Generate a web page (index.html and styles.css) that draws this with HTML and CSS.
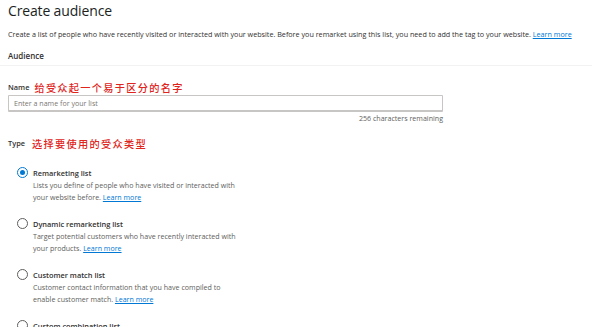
FILE: index.html
```html
<!DOCTYPE html>
<html lang="en">
<head>
    <meta charset="UTF-8">
    <title>Create audience</title>
    <link rel="stylesheet" href="styles.css">
</head>
<body>
    <div class="page">
        <h1 class="title">Create audience</h1>
        <p class="intro">Create a list of people who have recently visited or interacted with your website. Before you remarket using this list, you need to add the tag to your website. <a href="#">Learn more</a></p>
        <h2 class="section-title">Audience</h2>

        <div class="field name-field">
            <div class="field-label">
                <span>Name</span>
                <span class="note">给受众起一个易于区分的名字</span>
            </div>
            <input class="text-input" type="text" placeholder="Enter a name for your list">
            <div class="counter">256 characters remaining</div>
        </div>

        <div class="field type-field">
            <div class="field-label">
                <span>Type</span>
                <span class="note">选择要使用的受众类型</span>
            </div>
            <ul class="type-list">
                <li class="type-item">
                    <span class="radio checked"></span>
                    <div class="type-text">
                        <div class="type-name">Remarketing list</div>
                        <div class="type-desc">Lists you define of people who have visited or interacted with your website before. <a href="#">Learn more</a></div>
                    </div>
                </li>
                <li class="type-item">
                    <span class="radio"></span>
                    <div class="type-text">
                        <div class="type-name">Dynamic remarketing list</div>
                        <div class="type-desc">Target potential customers who have recently interacted with your products. <a href="#">Learn more</a></div>
                    </div>
                </li>
                <li class="type-item">
                    <span class="radio"></span>
                    <div class="type-text">
                        <div class="type-name">Customer match list</div>
                        <div class="type-desc">Customer contact information that you have compiled to enable customer match. <a href="#">Learn more</a></div>
                    </div>
                </li>
                <li class="type-item">
                    <span class="radio"></span>
                    <div class="type-text">
                        <div class="type-name">Custom combination list</div>
                    </div>
                </li>
            </ul>
        </div>
    </div>
</body>
</html>
```

FILE: styles.css
```css
body {
    margin: 0;
    background: #ffffff;
    font-family: 'Open Sans', 'Noto Sans', sans-serif;
    color: #323130;
}

.page {
    padding: 1px 8px 0;
}

.title {
    margin: 0;
    font-size: 14px;
    font-weight: 400;
    line-height: 20px;
    letter-spacing: -0.15px;
    color: #201f1e;
}

.intro {
    margin: 7px 0 0;
    font-size: 7.2px;
    line-height: 12px;
    color: #323130;
}

a {
    color: #0078d4;
    text-decoration: underline;
}

.section-title {
    margin: 10px -8px 0;
    padding: 0 8px 3px;
    font-size: 8px;
    font-weight: 600;
    line-height: 12px;
    border-bottom: 1px solid #f3f2f1;
}

.field-label {
    display: flex;
    align-items: center;
    gap: 5px;
    height: 14px;
    font-size: 7.4px;
    font-weight: 600;
}

.note {
    font-family: 'Noto Sans CJK SC', sans-serif;
    font-size: 10.2px;
    font-weight: 500;
    letter-spacing: 1.3px;
    color: #e0241b;
}

.type-field .note {
    margin-left: 2px;
}

.name-field {
    margin-top: 14px;
    width: 435px;
}

.text-input {
    display: block;
    box-sizing: border-box;
    width: 100%;
    height: 17px;
    margin-top: 1px;
    padding: 0 5px;
    border: 1px solid #c8c6c4;
    border-bottom-width: 2px;
    border-radius: 1px;
    font-family: inherit;
    font-size: 7.1px;
}

.text-input::placeholder {
    color: #7a7774;
}

.counter {
    text-align: right;
    font-size: 7.1px;
    line-height: 12px;
    color: #605e5c;
}

.type-field {
    margin-top: 12px;
}

.type-list {
    list-style: none;
    margin: 17px 0 0;
    padding: 0 0 0 9px;
}

.type-item {
    display: flex;
    align-items: flex-start;
    gap: 5px;
    margin-bottom: 15px;
}

.radio {
    flex: none;
    box-sizing: border-box;
    width: 11px;
    height: 11px;
    border: 1px solid #605e5c;
    border-radius: 50%;
    position: relative;
}

.radio.checked {
    border-color: #0078d4;
}

.radio.checked::after {
    content: "";
    position: absolute;
    left: 2px;
    top: 2px;
    width: 5px;
    height: 5px;
    border-radius: 50%;
    background: #0078d4;
}

.type-name {
    font-size: 7.4px;
    font-weight: 600;
    line-height: 12px;
    color: #323130;
}

.type-desc {
    width: 210px;
    font-size: 7.1px;
    line-height: 12px;
    color: #605e5c;
}
```
